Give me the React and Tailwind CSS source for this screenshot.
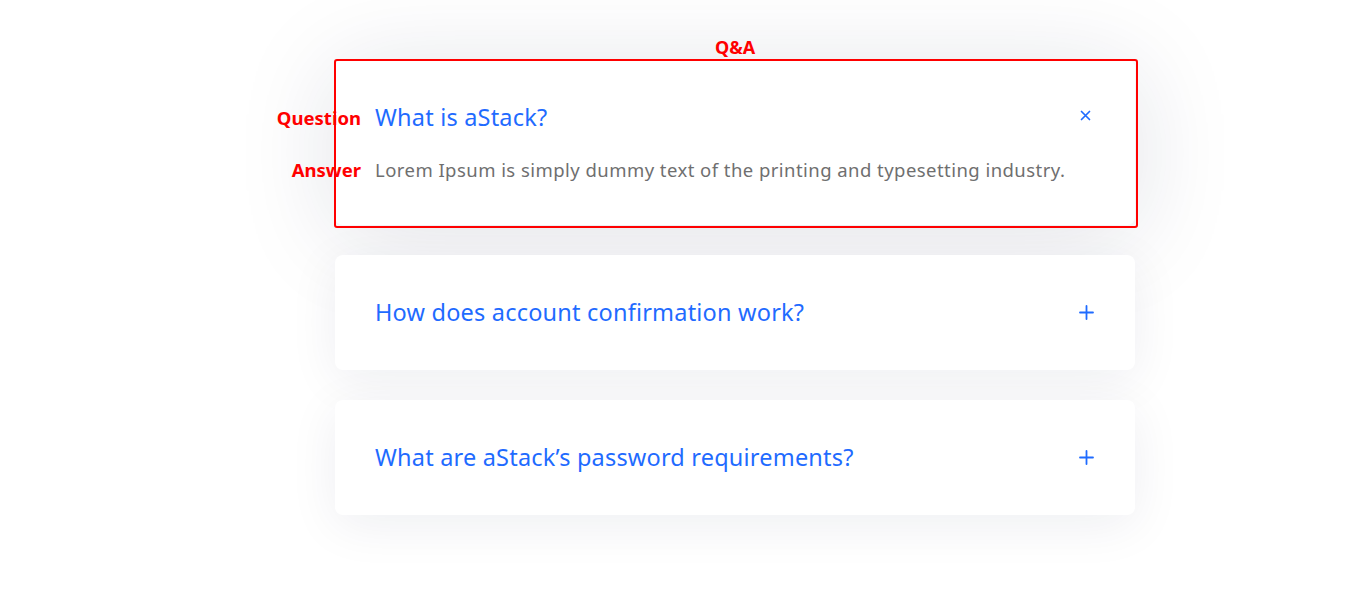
import { useState } from 'react';

const faqs = [
    {
        q: 'What is aStack?',
        a: 'Lorem Ipsum is simply dummy text of the printing and typesetting industry.',
    },
    {
        q: 'How does account confirmation work?',
        a: 'Lorem Ipsum is simply dummy text of the printing and typesetting industry.',
    },
    {
        q: 'What are aStack\u2019s password requirements?',
        a: 'Lorem Ipsum is simply dummy text of the printing and typesetting industry.',
    },
];

const PlusIcon = () => (
    <svg width="15" height="15" viewBox="0 0 15 15" fill="none">
        <path d="M7.5 1v13M1 7.5h13" stroke="#1f6bff" strokeWidth="1.8" strokeLinecap="round" />
    </svg>
);

const CloseIcon = () => (
    <svg width="11" height="11" viewBox="0 0 11 11" fill="none">
        <path d="M1.5 1.5l8 8M9.5 1.5l-8 8" stroke="#1f6bff" strokeWidth="1.7" strokeLinecap="round" />
    </svg>
);

const Item = ({ item, open, first, onToggle }) => {
    return (
        <div
            className={`relative w-[800px] rounded-lg bg-white px-10 py-10 ${
                open
                    ? 'shadow-[0_10px_100px_rgba(20,30,70,0.13)]'
                    : 'shadow-[0_10px_50px_rgba(20,30,70,0.07)]'
            }`}
        >
            {first && (
                <>
                    <div className="pointer-events-none absolute -top-px -left-px -right-[3px] -bottom-[3px] rounded-[3px] border-2 border-[#ff0000]" />
                    <div className="absolute -top-[22px] left-[380px] text-[18px] font-bold leading-none text-[#ff0000]">Q&amp;A</div>
                </>
            )}
            <button
                onClick={onToggle}
                className="relative flex h-[35px] w-full items-center justify-between text-left"
            >
                {first && (
                    <span className="absolute right-full mr-[14px] text-[18.5px] font-bold text-[#ff0000]">Question</span>
                )}
                <span className="text-[23.5px] leading-[35px] tracking-[0.2px] text-[#1f6bff]">{item.q}</span>
                {open ? (
                    <span className="mr-[4px] flex -translate-y-[2px] items-center"><CloseIcon /></span>
                ) : (
                    <span className="mr-[1px] flex items-center"><PlusIcon /></span>
                )}
            </button>
            {open && (
                <div className="relative mt-[21px] pb-[1px]">
                    {first && (
                        <span className="absolute right-full mr-[14px] text-[18.5px] font-bold leading-[28px] text-[#ff0000]">Answer</span>
                    )}
                    <p className="text-[18.5px] leading-[28px] tracking-[0.45px] text-[#6f6f6f]">{item.a}</p>
                </div>
            )}
        </div>
    );
};

const App = () => {
    const [openIdx, setOpenIdx] = useState(0);

    return (
        <div
            className="min-h-screen bg-white pl-[335px] pt-[60px]"
            style={{ fontFamily: '"Noto Sans", "Open Sans", sans-serif' }}
        >
            <div className="flex flex-col gap-[30px]">
                {faqs.map((item, i) => (
                    <Item
                        key={i}
                        item={item}
                        first={i === 0}
                        open={openIdx === i}
                        onToggle={() => setOpenIdx(openIdx === i ? -1 : i)}
                    />
                ))}
            </div>
        </div>
    );
};

export default App;
